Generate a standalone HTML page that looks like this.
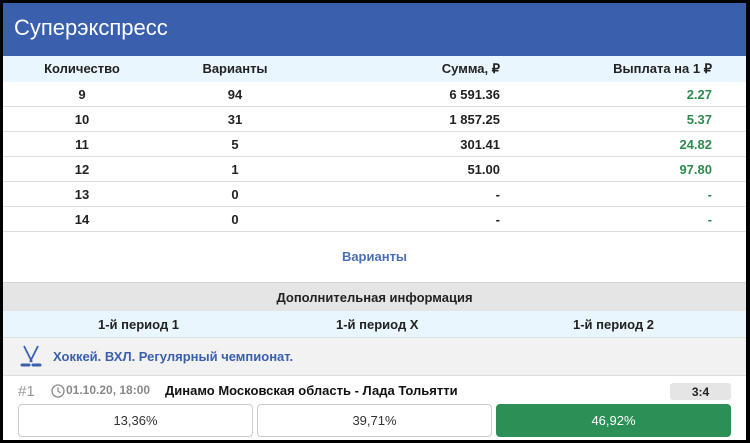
<!DOCTYPE html>
<html><head><meta charset="utf-8"><style>
*{margin:0;padding:0;box-sizing:border-box}
body{width:750px;height:443px;background:#000;font-family:"Liberation Sans",sans-serif;overflow:hidden;position:relative}
.w{position:absolute;left:3px;top:3px;width:743px;height:437px;background:#fff;overflow:hidden}
.hd{height:53px;background:#3a5fad;color:#fff;font-size:22px;padding:12px 0 0 11px}
.r{position:absolute;left:0;width:743px;height:25px;border-bottom:1px solid #ddd;font-size:13px;font-weight:bold;color:#222}
.r span{position:absolute;top:5px}
.c1{left:49px;width:60px;text-align:center}
.c2{left:202px;width:60px;text-align:center}
.c3{right:246px;text-align:right}
.c4{right:34px;text-align:right}
.g{color:#2e8b4e}
</style></head><body><div class="w">
<div class="hd">Суперэкспресс</div>
<div class="r" style="top:53px;height:26px;background:#eaf6fd;border:none"><span class="c1" style="left:34px;width:90px">Количество</span><span class="c2" style="left:196px;width:72px">Варианты</span><span class="c3">Сумма, ₽</span><span class="c4">Выплата на 1 ₽</span></div>
<div class="r" style="top:79px"><span class="c1">9</span><span class="c2">94</span><span class="c3">6 591.36</span><span class="c4 g">2.27</span></div>
<div class="r" style="top:104px"><span class="c1">10</span><span class="c2">31</span><span class="c3">1 857.25</span><span class="c4 g">5.37</span></div>
<div class="r" style="top:129px"><span class="c1">11</span><span class="c2">5</span><span class="c3">301.41</span><span class="c4 g">24.82</span></div>
<div class="r" style="top:154px"><span class="c1">12</span><span class="c2">1</span><span class="c3">51.00</span><span class="c4 g">97.80</span></div>
<div class="r" style="top:179px"><span class="c1">13</span><span class="c2">0</span><span class="c3">-</span><span class="c4 g">-</span></div>
<div class="r" style="top:204px"><span class="c1">14</span><span class="c2">0</span><span class="c3">-</span><span class="c4 g">-</span></div>
<div style="position:absolute;top:230px;left:0;width:743px;height:49px;text-align:center;padding-top:16px;color:#4a6fb5;font-size:13px;font-weight:bold">Варианты</div>
<div style="position:absolute;top:279px;left:0;width:743px;height:29px;background:#e5e5e5;border-top:1px solid #d5d5d5;text-align:center;padding-top:7px;font-size:13px;font-weight:bold;color:#222">Дополнительная информация</div>
<div style="position:absolute;top:308px;left:0;width:743px;height:27px;background:#eaf6fd;border-bottom:1px solid #d8e0e5;font-size:13px;font-weight:bold;color:#222">
<span style="position:absolute;left:95px;top:6px">1-й период 1</span><span style="position:absolute;left:333px;top:6px">1-й период X</span><span style="position:absolute;left:570px;top:6px">1-й период 2</span></div>
<div style="position:absolute;top:335px;left:0;width:743px;height:38px;background:#f2f2f2;border-bottom:1px solid #ddd">
<svg style="position:absolute;left:17px;top:7px" width="22" height="24" viewBox="0 0 22 24" fill="none" stroke="#3a5fad" stroke-width="1.8"><path d="M4 1 L12 17 M18 1 L10 17"/><path d="M2 20 L9 20 M13 20 L20 20" stroke-width="3" stroke-linecap="round"/></svg>
<span style="position:absolute;left:50px;top:11px;font-size:13px;font-weight:bold;color:#3a5fad">Хоккей. ВХЛ. Регулярный чемпионат.</span></div>
<div style="position:absolute;top:371px;left:0;width:743px;height:66px">
<span style="position:absolute;left:15px;top:9px;font-size:15px;color:#999">#1</span>
<svg style="position:absolute;left:48px;top:10px" width="14" height="14" viewBox="0 0 14 14" fill="none" stroke="#888" stroke-width="1.3"><circle cx="7" cy="7" r="6"/><path d="M7 3.5V7L9.5 9"/></svg>
<span style="position:absolute;left:63px;top:9px;font-size:12px;font-weight:bold;color:#888">01.10.20, 18:00</span>
<span style="position:absolute;left:162px;top:9px;font-size:13px;font-weight:bold;color:#111">Динамо Московская область - Лада Тольятти</span>
<span style="position:absolute;left:667px;top:9px;width:61px;height:17px;background:#e5e5e5;border-radius:3px;text-align:center;font-size:12px;font-weight:bold;color:#222;padding-top:2px">3:4</span>
<div style="position:absolute;left:15px;top:30px;width:235px;height:33px;border:1px solid #ccc;border-radius:4px;text-align:center;padding-top:8px;font-size:13px;color:#333">13,36%</div>
<div style="position:absolute;left:254px;top:30px;width:235px;height:33px;border:1px solid #ccc;border-radius:4px;text-align:center;padding-top:8px;font-size:13px;color:#333">39,71%</div>
<div style="position:absolute;left:493px;top:30px;width:235px;height:33px;background:#2b8f56;border-radius:4px;text-align:center;padding-top:9px;font-size:13px;color:#fff">46,92%</div>
</div>
</div></body></html>
